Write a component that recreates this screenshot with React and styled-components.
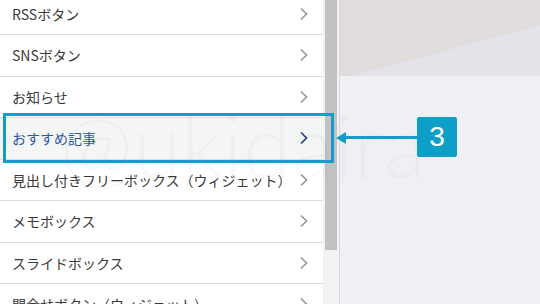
import React from 'react';
import styled, { createGlobalStyle } from 'styled-components';

const GlobalStyle = createGlobalStyle`
  html, body {
    margin: 0;
    padding: 0;
    background: #ffffff;
  }
  body {
    font-family: "Noto Sans CJK JP", "Noto Sans", sans-serif;
  }
`;

const items = [
  'RSSボタン',
  'SNSボタン',
  'お知らせ',
  'おすすめ記事',
  '見出し付きフリーボックス（ウィジェット）',
  'メモボックス',
  'スライドボックス',
  '問合せボタン（ウィジェット）',
];

const ACTIVE = 3;

const Chevron = ({ active }) => (
  <svg width="9" height="14" viewBox="0 0 9 14">
    <polyline
      points="2,1.5 7.5,7 2,12.5"
      fill="none"
      stroke={active ? '#25427c' : '#9a9a9a'}
      strokeWidth="1.7"
    />
  </svg>
);

const App = () => {
  return (
    <>
      <GlobalStyle />
      <Screen>
        <Sidebar>
          <MenuList>
            {items.map((label, i) => (
              <MenuRow key={label} $active={i === ACTIVE}>
                <MenuLabel $active={i === ACTIVE}>{label}</MenuLabel>
                <Chevron active={i === ACTIVE} />
              </MenuRow>
            ))}
          </MenuList>
        </Sidebar>
        <ScrollTrack>
          <ScrollThumb />
        </ScrollTrack>
        <Preview>
          <PreviewHeader />
          <PreviewBody />
        </Preview>

        <Watermark>@ukidaira</Watermark>
        <Highlight />
        <Pointer>
          <PointerHead />
          <PointerLine />
        </Pointer>
        <Badge>3</Badge>
      </Screen>
    </>
  );
};

export default App;

const Screen = styled.div`
  position: relative;
  display: flex;
  width: 540px;
  height: 304px;
  overflow: hidden;
`;

const Sidebar = styled.div`
  width: 323px;
  flex-shrink: 0;
  background: #ffffff;
  overflow: hidden;
`;

const MenuList = styled.ul`
  list-style: none;
  margin: -6.5px 0 0;
  padding: 0;
`;

const MenuRow = styled.li`
  display: flex;
  align-items: center;
  justify-content: space-between;
  height: 40.5px;
  padding: 0 15px 0 12px;
  border-bottom: 1px solid #dcdcdc;
  background: ${p => (p.$active ? '#f4f5f5' : '#ffffff')};
`;

const MenuLabel = styled.span`
  font-size: 14px;
  color: ${p => (p.$active ? '#2b5a9e' : '#3a3a3a')};
  white-space: nowrap;
`;

const ScrollTrack = styled.div`
  width: 17px;
  flex-shrink: 0;
  background: #f1f2f1;
  border-right: 1px solid #d6d6d6;
  padding: 0 2px;
  box-sizing: border-box;
`;

const ScrollThumb = styled.div`
  height: 250px;
  background: #c1c1c1;
`;

const Preview = styled.div`
  flex: 1;
  display: flex;
  flex-direction: column;
  background: #f0eff4;
`;

const PreviewHeader = styled.div`
  position: relative;
  height: 76px;
  background: #e0dddc;

  &::after {
    content: '';
    position: absolute;
    inset: 0;
    background: #e4e3e9;
    clip-path: polygon(12px 100%, 100% 25px, 100% 100%);
  }
`;

const PreviewBody = styled.div`
  flex: 1;
`;

const Watermark = styled.div`
  position: absolute;
  left: 60px;
  top: 100px;
  font-family: Lato, "Open Sans", sans-serif;
  font-weight: 300;
  font-size: 88px;
  line-height: 1;
  color: rgba(0, 0, 0, 0.022);
  pointer-events: none;
  white-space: nowrap;
`;

const Highlight = styled.div`
  position: absolute;
  left: 3px;
  top: 113px;
  width: 331px;
  height: 50px;
  box-sizing: border-box;
  border: 3px solid #159dca;
`;

const Pointer = styled.div`
  position: absolute;
  left: 336px;
  top: 131px;
  width: 82px;
  height: 13px;
  display: flex;
  align-items: center;
`;

const PointerHead = styled.div`
  width: 0;
  height: 0;
  border-top: 6.5px solid transparent;
  border-bottom: 6.5px solid transparent;
  border-right: 10px solid #159dca;
`;

const PointerLine = styled.div`
  flex: 1;
  height: 3px;
  background: #159dca;
`;

const Badge = styled.div`
  position: absolute;
  left: 417px;
  top: 117px;
  width: 40px;
  height: 40px;
  border-radius: 2px;
  background: #0e9fc9;
  color: #ffffff;
  display: flex;
  align-items: center;
  justify-content: center;
  font-family: "Liberation Sans", Arial, sans-serif;
  font-size: 28px;
  line-height: 1;
`;
